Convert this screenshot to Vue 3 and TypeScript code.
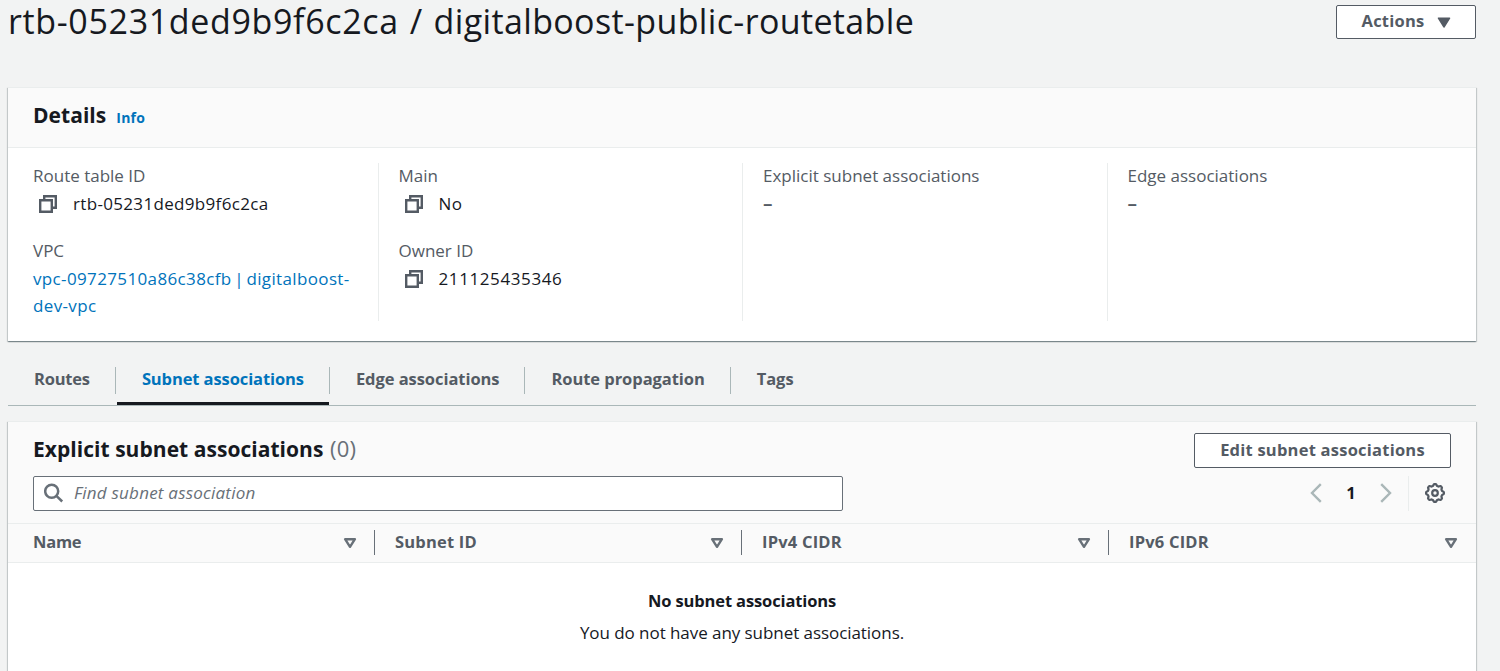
<script setup lang="ts">
interface Field {
  label: string
  value: string
  kind: 'copy' | 'link' | 'empty'
  numeric?: boolean
}

const columns: Field[][] = [
  [
    { label: 'Route table ID', value: 'rtb-05231ded9b9f6c2ca', kind: 'copy' },
    { label: 'VPC', value: 'vpc-09727510a86c38cfb | digitalboost-dev-vpc', kind: 'link' },
  ],
  [
    { label: 'Main', value: 'No', kind: 'copy' },
    { label: 'Owner ID', value: '211125435346', kind: 'copy', numeric: true },
  ],
  [{ label: 'Explicit subnet associations', value: '–', kind: 'empty' }],
  [{ label: 'Edge associations', value: '–', kind: 'empty' }],
]

const tabs = ['Routes', 'Subnet associations', 'Edge associations', 'Route propagation', 'Tags']
const activeTab = 'Subnet associations'
const headers = ['Name', 'Subnet ID', 'IPv4 CIDR', 'IPv6 CIDR']

// Outline of the settings gear: eight rounded teeth around the centre.
const gearPath = (() => {
  const points: string[] = []
  for (let i = 0; i <= 96; i++) {
    const a = (i / 96) * Math.PI * 2
    const wave = Math.cos(8 * a)
    const r = 8.1 + 0.85 * Math.tanh(2 * wave)
    points.push(`${(10 + r * Math.sin(a)).toFixed(2)} ${(10 - r * Math.cos(a)).toFixed(2)}`)
  }
  return `M${points.join('L')}Z`
})()
</script>

<template>
  <main class="page">
    <header class="page-header">
      <h1><span class="route-id">rtb-05231ded9b9f6c2ca</span> / digitalboost-public-routetable</h1>
      <button class="btn actions" type="button">
        <span>Actions</span>
        <svg class="caret" width="14" height="11" viewBox="0 0 14 11">
          <path d="M1.4 1.2h11.2L7 10z" fill="#545b64" stroke="#545b64" stroke-width="1.4" stroke-linejoin="round" />
        </svg>
      </button>
    </header>

    <section class="card">
      <div class="card-header">
        <h2>Details</h2>
        <a class="info">Info</a>
      </div>
      <div class="details">
        <div v-for="(col, i) in columns" :key="i" class="col">
          <div v-for="f in col" :key="f.label" class="field">
            <div class="label">{{ f.label }}</div>
            <div class="value" :class="[f.kind, { numeric: f.numeric }]">
              <svg v-if="f.kind === 'copy'" class="copy-icon" width="18" height="18" viewBox="0 0 18 18">
                <path d="M1.2 5.2h11.6v11.6H1.2zM5.2 5V1.2h11.6v11.6H13" fill="none" stroke="#545b64" stroke-width="2.4" />
              </svg>
              <span>{{ f.value }}</span>
            </div>
          </div>
        </div>
      </div>
    </section>

    <nav class="tabs">
      <div v-for="t in tabs" :key="t" class="tab" :class="{ active: t === activeTab }">
        <span class="tab-label">{{ t }}</span>
      </div>
    </nav>

    <section class="card table-card">
      <div class="table-top">
        <div class="title-row">
          <h2>Explicit subnet associations <span class="count">(0)</span></h2>
          <button class="btn edit" type="button">Edit subnet associations</button>
        </div>
        <div class="tools">
          <div class="search">
            <svg width="20" height="20" viewBox="0 0 20 20">
              <g fill="none" stroke="#687078" stroke-width="2.5">
                <circle cx="7.7" cy="8.2" r="6.5" />
                <path d="M12.4 12.9l5.8 5.6" />
              </g>
            </svg>
            <span>Find subnet association</span>
          </div>
          <div class="pager">
            <svg width="12" height="20" viewBox="0 0 12 20">
              <path d="M10.8 1.2L2 10l8.8 8.8" fill="none" stroke="#aab7b8" stroke-width="2.4" />
            </svg>
            <span class="page-no">1</span>
            <svg width="12" height="20" viewBox="0 0 12 20">
              <path d="M1.2 1.2L10 10l-8.8 8.8" fill="none" stroke="#aab7b8" stroke-width="2.4" />
            </svg>
            <div class="settings">
              <svg width="20" height="20" viewBox="0 0 20 20">
                <g fill="none" stroke="#545b64" stroke-width="2.2">
                  <path :d="gearPath" stroke-linejoin="round" />
                  <circle cx="10" cy="10" r="2.8" />
                </g>
              </svg>
            </div>
          </div>
        </div>
      </div>
      <div class="thead">
        <div v-for="h in headers" :key="h" class="th">
          <span>{{ h }}</span>
          <svg width="14" height="12" viewBox="0 0 14 12">
            <path d="M2.1 2.2h9.8L7 9.8z" fill="none" stroke="#687078" stroke-width="2.4" stroke-linejoin="round" />
          </svg>
        </div>
      </div>
      <div class="empty-state">
        <strong>No subnet associations</strong>
        <p>You do not have any subnet associations.</p>
      </div>
    </section>
  </main>
</template>

<style>
html,
body {
  margin: 0;
  background: #f2f3f3;
  overflow: hidden;
}
</style>

<style scoped>
.page {
  box-sizing: border-box;
  height: 671px;
  padding: 0 24px 0 8px;
  background: #f2f3f3;
  color: #16191f;
  font-family: "Open Sans", "Noto Sans", sans-serif;
  font-size: 17px;
  line-height: 27.5px;
}
h1,
h2,
p {
  margin: 0;
}
.page-header {
  display: flex;
  justify-content: space-between;
  align-items: flex-start;
  height: 87px;
}
h1 {
  font-size: 34px;
  font-weight: 400;
  line-height: 43px;
  letter-spacing: 0.36px;
  word-spacing: 1.8px;
  white-space: nowrap;
}
.route-id {
  letter-spacing: 0.65px;
}
.btn {
  display: flex;
  align-items: center;
  justify-content: center;
  box-sizing: border-box;
  border: 1px solid #545b64;
  border-radius: 2px;
  background: #fff;
  color: #545b64;
  font: 700 16.5px/27px "Open Sans", sans-serif;
  letter-spacing: 0.23px;
  padding: 0 0 2px;
}
.actions {
  width: 140px;
  height: 34px;
  margin-top: 5px;
  gap: 13px;
  padding: 0 0 3px 1px;
}
.caret {
  margin-top: 3px;
}
.card {
  box-sizing: border-box;
  border-top: 1px solid #eaeded;
  background: #fff;
  box-shadow: 0 1px 1px 0 rgba(0, 28, 36, 0.3), 1px 1px 1px 0 rgba(0, 28, 36, 0.15), -1px 1px 1px 0 rgba(0, 28, 36, 0.15);
}
.card-header {
  display: flex;
  align-items: baseline;
  box-sizing: border-box;
  height: 60px;
  padding: 12px 25px 0;
  border-bottom: 1px solid #eaeded;
  background: #fafafa;
}
h2 {
  font-size: 21px;
  font-weight: 700;
  line-height: 30px;
  letter-spacing: 0.04px;
}
.info {
  margin-left: 10px;
  color: #0073bb;
  font-size: 14px;
  font-weight: 700;
  letter-spacing: 0.2px;
}
.details {
  display: grid;
  grid-template-columns: repeat(4, 1fr);
  padding: 15px 5px 20px 5px;
}
.col {
  display: flex;
  flex-direction: column;
  gap: 20px;
  height: 158px;
  box-sizing: border-box;
  padding: 0 20px;
}
.col + .col {
  border-left: 1px solid #eaeded;
}
.field {
  margin-top: -1px;
  margin-bottom: 1px;
}
.label {
  color: #545b64;
}
.value {
  letter-spacing: 0.33px;
}
.value.numeric {
  letter-spacing: 0.6px;
}
.value.copy {
  display: flex;
  align-items: center;
}
.copy-icon {
  margin: 1px 16px 0 6px;
}
.value.link {
  color: #0073bb;
  letter-spacing: 0.36px;
  word-spacing: -2.2px;
}
.value.empty {
  color: #545b64;
  font-size: 19px;
  font-weight: 600;
}
.tabs {
  display: flex;
  height: 65px;
  margin-bottom: 15px;
  box-sizing: border-box;
  border-bottom: 1px solid #aab7b8;
}
.tab {
  position: relative;
  display: flex;
  box-sizing: border-box;
  padding-top: 26px;
  color: #545b64;
  font-size: 16.5px;
  font-weight: 700;
  letter-spacing: -0.06px;
}
.tab:first-child {
  letter-spacing: -0.2px;
}
.tab-label {
  padding: 0 25px 0 26px;
  line-height: 24px;
  height: 27px;
  border-right: 1px solid #aab7b8;
  white-space: nowrap;
}
.tab:last-child .tab-label {
  border-right: 0;
}
.tab.active {
  color: #0073bb;
  letter-spacing: -0.1px;
}
.tab.active::after {
  content: "";
  position: absolute;
  left: 1px;
  right: 1px;
  bottom: 0;
  height: 3px;
  background: #16191f;
}
.table-card {
  height: 256px;
}
.table-top {
  box-sizing: border-box;
  height: 102px;
  padding: 11px 25px 0;
  background: #fafafa;
  border-bottom: 1px solid #eaeded;
}
.title-row {
  display: flex;
  justify-content: space-between;
  height: 43px;
}
.count {
  margin-left: 1px;
  color: #687078;
  font-size: 22px;
  font-weight: 400;
  letter-spacing: 0.3px;
}
.edit {
  width: 257px;
  height: 35px;
}
.tools {
  display: flex;
  justify-content: space-between;
  height: 35px;
}
.search {
  display: flex;
  align-items: center;
  box-sizing: border-box;
  width: 810px;
  padding: 0 0 1px 10px;
  gap: 10px;
  border: 1px solid #687078;
  border-radius: 2px;
  background: #fff;
  color: #687078;
  font-style: italic;
  letter-spacing: 0.22px;
}
.search span {
  margin-top: -1px;
}
.pager {
  display: flex;
  align-items: center;
}
.pager > svg,
.settings svg {
  margin-bottom: 1px;
}
.page-no {
  width: 58px;
  margin-bottom: 2px;
  text-align: center;
  font-size: 16.5px;
  font-weight: 700;
}
.settings {
  display: flex;
  align-items: center;
  box-sizing: border-box;
  height: 35px;
  width: 43px;
  margin-left: 16px;
  padding-left: 16px;
  border-left: 1px solid #eaeded;
}
.thead {
  display: grid;
  grid-template-columns: repeat(4, 1fr);
  box-sizing: border-box;
  height: 39px;
  padding-top: 6px;
  border-bottom: 1px solid #eaeded;
  background: #fafafa;
}
.th {
  display: flex;
  align-items: center;
  justify-content: space-between;
  box-sizing: border-box;
  height: 25px;
  padding: 0 17px 0 20px;
  border-right: 1px solid #687078;
  color: #545b64;
  font-size: 16.5px;
  font-weight: 700;
  letter-spacing: 0.2px;
}
.th span {
  margin-top: -2px;
}
.th svg {
  margin-top: 1px;
}
.th:first-child {
  padding-left: 25px;
  letter-spacing: -0.25px;
}
.th:last-child {
  border-right-color: transparent;
}
.empty-state {
  padding-top: 24px;
  text-align: center;
}
.empty-state strong {
  display: block;
  font-size: 16.5px;
  font-weight: 700;
  letter-spacing: -0.13px;
}
.empty-state p {
  margin-top: 4px;
  letter-spacing: -0.06px;
}
</style>
